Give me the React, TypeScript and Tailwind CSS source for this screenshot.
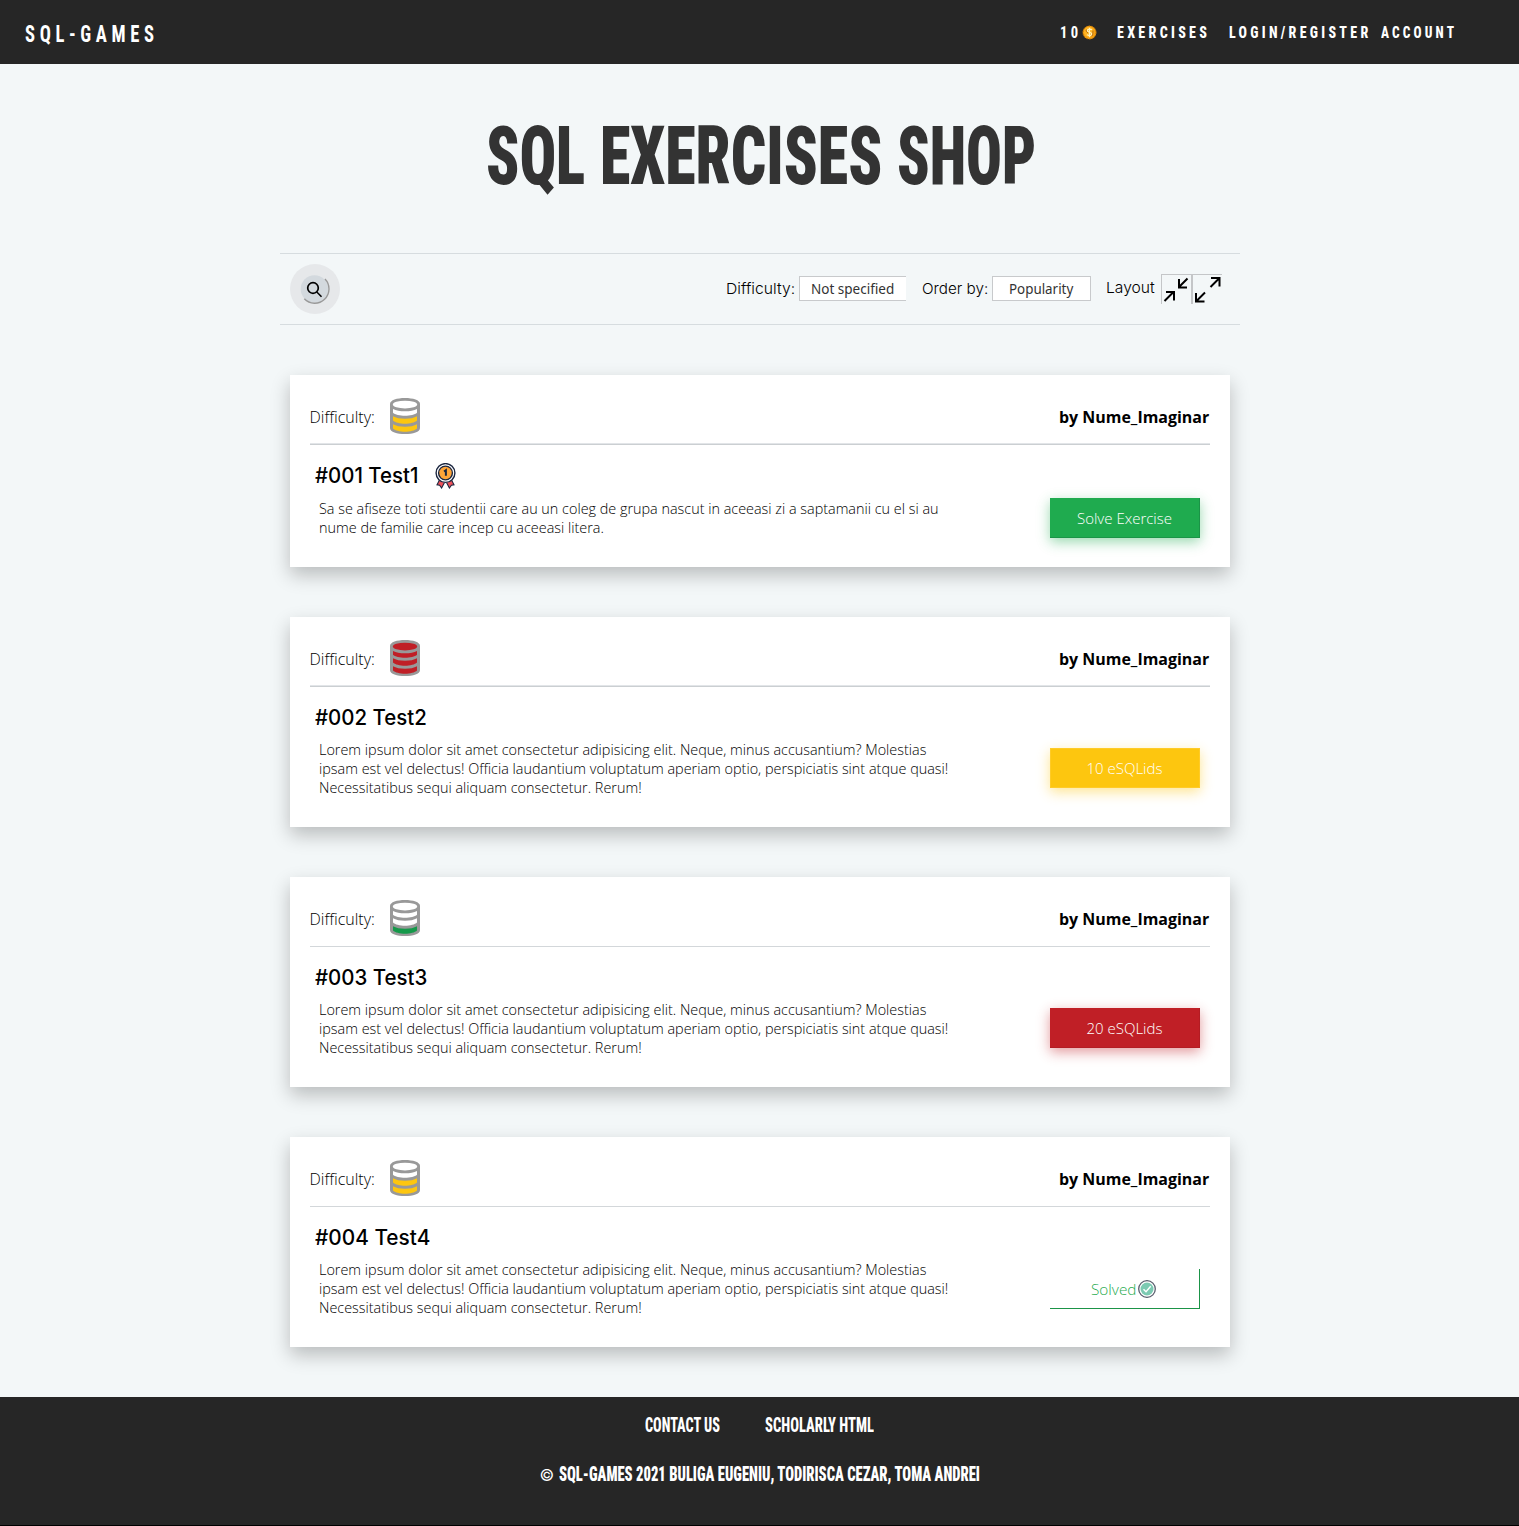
import { useLayoutEffect, useRef, useState, type ReactNode } from "react";

// Sets a line of text to an exact width by stretching it horizontally.
function Fit({ width, spacing = 0, className = "", children }: { width: number; spacing?: number; className?: string; children: ReactNode }) {
  const ref = useRef<HTMLSpanElement>(null);
  const [scale, setScale] = useState(1);
  useLayoutEffect(() => {
    if (ref.current) setScale(width / (ref.current.offsetWidth - spacing));
  }, [width, spacing]);
  return (
    <span className="inline-block whitespace-nowrap text-left" style={{ width }}>
      <span
        ref={ref}
        className={"inline-block origin-left " + className}
        style={{ transform: `scaleX(${scale})`, letterSpacing: spacing }}
      >
        {children}
      </span>
    </span>
  );
}

const display = "font-['Roboto',sans-serif] [font-stretch:75%] font-bold";
const geo = "font-['Inter',sans-serif]";

function Coin() {
  return (
    <svg width="15" height="15" viewBox="0 0 15 15">
      <circle cx="7.5" cy="7.5" r="6.8" fill="#f5a010" />
      <circle cx="7.5" cy="7.5" r="6.6" fill="none" stroke="#a8640a" strokeDasharray="1.5 1.5" />
      <circle cx="7" cy="7" r="5" fill="#ffb524" />
      <path d="M9.900 5C8.800 3.600 5.200 3.800 5.400 5.800c.2 1.800 4.400 1.200 4.400 3.200 0 2-3.400 2-4.800.6M7.500 2.800v9.400" fill="none" stroke="#fff3c0" strokeWidth="1.200" />
      <path d="M11 5.500C10.800 8 11.400 9 9.800 11.200M4.300 4.500C3.800 6 4.500 7 6 8" fill="none" stroke="#a85c08" strokeWidth=".9" />
    </svg>
  );
}

function Cylinder({ level, color }: { level: number; color: string }) {
  const f = (n: number) => (level >= n ? color : "#fff");
  return (
    <svg width="30" height="36" viewBox="0 0 30 36">
      <path d="M0 6C0 2 7 0 15 0s15 2 15 6v24c0 4-7 6-15 6S0 34 0 30Z" fill="#999" />
      <ellipse cx="15" cy="6.600" rx="12.200" ry="3.900" fill={f(4)} />
      <path d="M3 11c3 1.600 7 2.300 12 2.300s9-.7 12-2.300v3.800c-2 2-7 3-12 3s-10-1-12-3Z" fill={f(3)} />
      <path d="M3 18.300c3 1.700 7 2.500 12 2.500s9-.8 12-2.500v4.300c-2 2-7 3.200-12 3.200s-10-1.200-12-3.200Z" fill={f(2)} />
      <path d="M3 26.300c3 1.700 7 2.500 12 2.500s9-.8 12-2.500v4.200c-2 2-7 3.200-12 3.200s-10-1.200-12-3.200Z" fill={f(1)} />
    </svg>
  );
}

function Medal() {
  return (
    <svg width="21" height="26" viewBox="0 0 21 26">
      <path d="M4.500 17 2 21.800l2.600.4 2 2.800 2.900-5.500M16.500 17l2.500 4.800-2.600.4-2 2.800-2.900-5.500" fill="#f0525a" stroke="#1c2740" strokeWidth="1.100" />
      <circle cx="10.500" cy="10" r="9.400" fill="#fff" stroke="#1c2740" strokeWidth="1.400" />
      <circle cx="10.500" cy="10" r="6.900" fill="#ffa538" stroke="#1c2740" strokeWidth="1.400" />
      <path d="M9 8.500 10.900 7.200v5.600" fill="none" stroke="#1c2740" strokeWidth="2" />
    </svg>
  );
}

function SolvedBadge() {
  return (
    <svg width="18" height="18" viewBox="0 0 18 18">
      <circle cx="9" cy="9" r="8.300" fill="#fff" stroke="#5a5f6e" strokeWidth="1.300" />
      <circle cx="9" cy="9" r="6.500" fill="#7ccab2" />
      <path d="m5.500 9.300 2.500 2.400 4.700-5.400" fill="none" stroke="#fff" strokeWidth="1.400" />
    </svg>
  );
}

function SearchButton() {
  return (
    <button className="flex size-[50px] items-center justify-center rounded-full bg-[#e6e8ea]">
      <svg width="30" height="30" viewBox="0 0 30 30">
        <circle cx="14.500" cy="15" r="13.800" fill="#d3d9de" />
        <path d="M25 5A14 14 0 0 1 4.300 24.800" fill="none" stroke="#999" strokeWidth="1.400" />
        <circle cx="13" cy="14" r="5.300" fill="none" stroke="#000" strokeWidth="1.700" />
        <path d="m16.800 18 4.700 4.800" stroke="#000" strokeWidth="1.500" />
      </svg>
    </button>
  );
}

const lorem = [
  { t: "Lorem ipsum dolor sit amet consectetur adipisicing elit. Neque, minus accusantium? Molestias", w: 607 },
  { t: "ipsam est vel delectus! Officia laudantium voluptatum aperiam optio, perspiciatis sint atque quasi!", w: 629 },
  { t: "Necessitatibus sequi aliquam consectetur. Rerum!", w: 323 },
];

const cards = [
  {
    title: "#001 Test1", tw: 103, medal: true, level: 2, color: "#fdc60f", height: "h-[192px]", rule: "border-t border-b border-t-[#e2e5e8] border-b-[#cbcfd2]",
    text: [
      { t: "Sa se afiseze toti studentii care au un coleg de grupa nascut in aceeasi zi a saptamanii cu el si au", w: 620 },
      { t: "nume de familie care incep cu aceeasi litera.", w: 285 },
    ],
    offset: "pt-[9px]", action: "mt-[9px] bg-[#1fab4f] border-r border-b border-[#1b9447] text-white pl-px shadow-[0_4px_12px_rgba(31,171,79,0.45)]", label: "Solve Exercise", lw: 95,
  },
  {
    title: "#002 Test2", tw: 112, level: 4, color: "#c01f26", height: "h-[210px]", rule: "border-t border-b border-t-[#e2e5e8] border-b-[#cbcfd2]", text: lorem,
    offset: "pt-[8px]", action: "mt-[17px] bg-[#fdc60f] border border-[#ffcb27] text-white shadow-[0_4px_12px_rgba(253,198,15,0.45)]", label: "10 eSQLids", lw: 76,
  },
  {
    title: "#003 Test3", tw: 112, level: 1, color: "#15994a", height: "h-[210px]", rule: "mt-px border-t border-[#d3d7da]", text: lorem,
    offset: "pt-[8px]", action: "mt-[17px] bg-[#c01f26] border-r border-b border-[#b31c23] text-white pl-px shadow-[0_4px_12px_rgba(192,31,38,0.45)]", label: "20 eSQLids", lw: 76,
  },
  {
    title: "#004 Test4", tw: 115, level: 2, color: "#fdc60f", height: "h-[210px]", rule: "mt-px border-t border-[#d3d7da]", text: lorem,
    offset: "pt-[8px]", action: "mt-[18px] pr-[2px] border-r border-b border-[#1b9447] text-[#1fab4f]", label: "Solved", lw: 45, solved: true,
  },
];

export default function App() {
  return (
    <div className="flex h-[1526px] w-full flex-col bg-[#f3f7f8] font-['Open_Sans',sans-serif] text-black">
      <header className="flex h-16 shrink-0 items-center bg-[#262626] pl-[25px] pr-[65px] text-white">
        <Fit width={129} spacing={6} className={display + " text-[24px] leading-8 pt-[3px]"}>SQL-GAMES</Fit>
        <nav className={"ml-auto flex items-center text-[17px] leading-6 " + display}>
          <Fit width={18} spacing={4}>10</Fit>
          <span className="ml-[4px] mr-[20px]"><Coin /></span>
          <Fit width={90} spacing={4} className="font-extrabold">EXERCISES</Fit>
          <span className="ml-[22px]"><Fit width={139} spacing={4} className="font-extrabold">LOGIN/REGISTER</Fit></span>
          <span className="ml-[13px]"><Fit width={73} spacing={4} className="font-extrabold">ACCOUNT</Fit></span>
        </nav>
      </header>

      <main className="mx-auto flex w-[960px] flex-col">
        <h1 className={"flex h-[189px] pt-[45px] pl-[206px] text-[#333] text-[81px] leading-[96px] font-black font-['Roboto',sans-serif] [font-stretch:75%]"}>
          <Fit width={99}>SQL</Fit>
          <span className="ml-[15px]"><Fit width={282}>EXERCISES</Fit></span>
          <span className="ml-[15px]"><Fit width={139}>SHOP</Fit></span>
        </h1>

        <section className="flex h-[72px] items-center border-y border-[#d6dcdf] pl-[10px] pr-[18px]">
          <SearchButton />
          <div className={"ml-auto flex items-center text-[15px] leading-6 font-[350] " + geo}>
            <Fit width={69}>Difficulty:</Fit>
            <button className="ml-[4px] -mt-[2px] flex h-[25px] w-[107px] items-center border border-r-0 border-[#c8cacc] bg-white pl-[11px] pt-px font-['Noto_Sans',sans-serif] text-[14px] leading-5 font-normal text-[#333]">
              <Fit width={83}>Not specified</Fit>
            </button>
            <span className="ml-[16px]"><Fit width={66}>Order by:</Fit></span>
            <button className="ml-[4px] -mt-[2px] flex h-[25px] w-[99px] items-center border border-[#c8cacc] bg-white pl-[16px] pt-px font-['Noto_Sans',sans-serif] text-[14px] leading-5 font-normal text-[#333]">
              <Fit width={64}>Popularity</Fit>
            </button>
            <span className="ml-[15px] -mt-[2px]"><Fit width={49}>Layout</Fit></span>
            <div className="ml-[6px] flex">
              <button className="h-[30px] w-[30px] border-l border-t border-[#c4c6c8]">
                <svg width="29" height="29" viewBox="0 0 29 29" fill="none" stroke="#000" strokeWidth="2">
                  <path d="m2.500 26 9-9M4 17h8v8.500M25.500 3.500l-8.500 8.500M17 4v8.500h8" />
                </svg>
              </button>
              <button className="h-[30px] w-[31px] border-l-2 border-t border-[#c4c6c8]">
                <svg width="29" height="29" viewBox="0 0 29 29" fill="none" stroke="#000" strokeWidth="2">
                  <path d="m17.500 12 9-9M18 3h8.500v8.500M12 17.500l-8.500 8.500M3 18v8.500h8.500" />
                </svg>
              </button>
            </div>
          </div>
        </section>

        <section className="flex flex-col gap-[50px] px-[10px] pt-[50px]">
          {cards.map((c) => (
            <article key={c.title} className={"bg-white px-5 shadow-[0_8px_18px_rgba(0,0,0,0.24)] " + c.height}>
              <div className="flex h-[68px] items-start pt-[23px]">
                <span className="pt-[7px] text-[16px] leading-6 font-[330]"><Fit width={65}>Difficulty:</Fit></span>
                <span className="ml-[15px]"><Cylinder level={c.level} color={c.color} /></span>
                <span className="ml-auto pt-[7px] text-[16px] leading-6 font-bold"><Fit width={150.5}>by Nume_Imaginar</Fit></span>
              </div>
              <div className={c.rule} />
              <div className="flex justify-between pr-[10px]">
                <div>
                  <div className="flex h-[45px] items-start pl-[5px] pt-[17px]">
                    <span className={"text-[21px] leading-7 font-medium " + geo}><Fit width={c.tw}>{c.title}</Fit></span>
                    {c.medal && <span className="ml-[17px] pt-px"><Medal /></span>}
                  </div>
                  <div className={"flex flex-col pl-[9.5px] text-[14px] leading-[19px] font-[350] " + c.offset}>
                    {c.text.map((l) => <Fit key={l.t} width={l.w}>{l.t}</Fit>)}
                  </div>
                </div>
                <div className="flex flex-col pt-[44px]">
                  <button className={"flex h-10 w-[150px] items-center justify-center gap-[2px] text-[15px] leading-6 font-[340] " + c.action}>
                    <Fit width={c.lw}>{c.label}</Fit>
                    {c.solved && <SolvedBadge />}
                  </button>
                </div>
              </div>
            </article>
          ))}
        </section>
      </main>

      <footer className={"mt-[50px] flex h-[129px] shrink-0 flex-col items-center border-b border-black bg-[#262626] text-white " + display}>
        <div className="mt-[17px] flex gap-[45px] text-[19.5px] leading-6">
          <Fit width={75} className="font-extrabold">CONTACT US</Fit>
          <Fit width={109} className="font-extrabold">SCHOLARLY HTML</Fit>
        </div>
        <div className="mt-[25px] flex items-center text-[19.5px] leading-6">
          <span className="mr-[4px] font-['Inter'] text-[16px] font-normal [font-stretch:100%]"><Fit width={15}>©</Fit></span>
          <Fit width={421} className="font-black">SQL-GAMES 2021 BULIGA EUGENIU, TODIRISCA CEZAR, TOMA ANDREI</Fit>
        </div>
      </footer>
    </div>
  );
}
